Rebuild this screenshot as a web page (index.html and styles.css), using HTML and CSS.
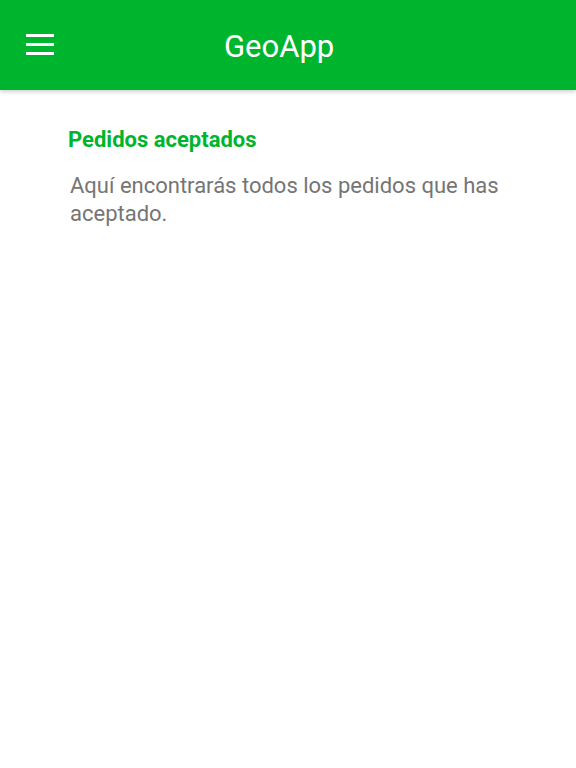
FILE: index.html
```html
<!DOCTYPE html>
<html lang="es">
<head>
    <meta charset="UTF-8">
    <title>GeoApp</title>
    <link rel="stylesheet" href="styles.css">
</head>
<body>
    <header class="app-bar">
        <button class="menu-btn" aria-label="Menú">
            <svg width="28" height="24" viewBox="0 0 28 24">
                <rect x="0" y="1" width="28" height="3" fill="#fff"/>
                <rect x="0" y="10" width="28" height="3" fill="#fff"/>
                <rect x="0" y="19" width="28" height="3" fill="#fff"/>
            </svg>
        </button>
        <h1 class="app-title">GeoApp</h1>
    </header>

    <main class="content">
        <h2 class="section-title">Pedidos aceptados</h2>
        <p class="section-text">Aquí encontrarás todos los pedidos que has aceptado.</p>
    </main>
</body>
</html>
```

FILE: styles.css
```css
body {
    margin: 0;
    font-family: Roboto, "Noto Sans", sans-serif;
    background: #fff;
}
.app-bar {
    height: 90px;
    background: #00b52e;
    display: flex;
    align-items: center;
    position: relative;
    box-shadow: 0 2px 4px rgba(0,0,0,0.18);
}
.menu-btn {
    background: none;
    border: 0;
    padding: 0;
    margin-left: 26px;
    width: 28px;
    height: 24px;
    margin-top: 0;
}
.menu-btn svg {
    display: block;
}
.app-title {
    margin: 3px 0 0 170px;
    color: #fff;
    font-size: 31px;
    font-weight: 400;
}
.content {
    padding: 35px 60px 0 68px;
}
.section-title {
    margin: 0;
    color: #00b52e;
    font-size: 22px;
    font-weight: 700;
    line-height: 30px;
}
.section-text {
    margin: 17px 0 0 2px;
    color: #757575;
    font-size: 22px;
    line-height: 28px;
    max-width: 440px;
}
```
